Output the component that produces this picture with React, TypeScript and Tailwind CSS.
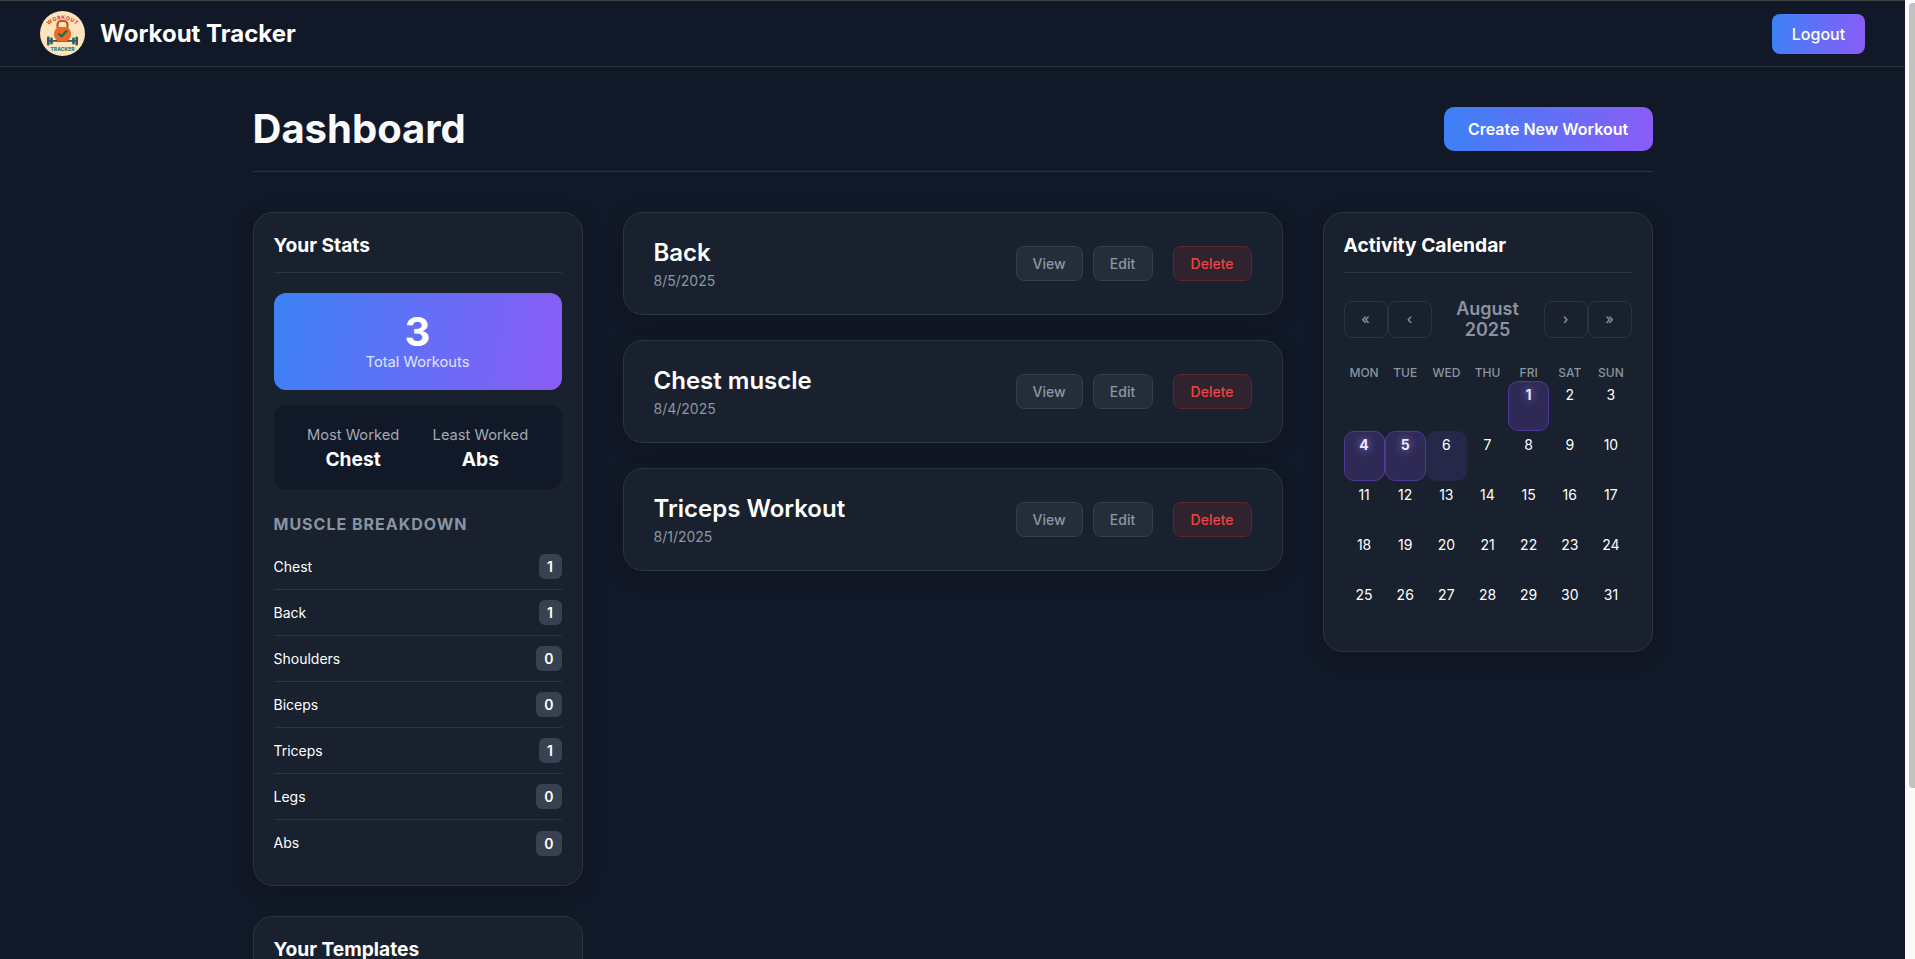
import React from 'react';

const stats = [
  { name: 'Chest', count: 1 },
  { name: 'Back', count: 1 },
  { name: 'Shoulders', count: 0 },
  { name: 'Biceps', count: 0 },
  { name: 'Triceps', count: 1 },
  { name: 'Legs', count: 0 },
  { name: 'Abs', count: 0 },
];

const workouts = [
  { title: 'Back', date: '8/5/2025' },
  { title: 'Chest muscle', date: '8/4/2025' },
  { title: 'Triceps Workout', date: '8/1/2025' },
];

const weekDays = ['MON', 'TUE', 'WED', 'THU', 'FRI', 'SAT', 'SUN'];
const workoutDays = [1, 4, 5];
const today = 6;
const days = Array.from({ length: 31 }, (_, i) => i + 1);

const Logo = () => (
  <svg viewBox="0 0 45 45" className="w-[45px] h-[45px] shrink-0">
    <defs>
      <path id="logo-arc" d="M5 20 A19 19 0 0 1 40 20" />
    </defs>
    <circle cx="22.5" cy="22.5" r="22.5" fill="#fde4bf" />
    <text fontSize="5.4" fontWeight="800" fill="#d9502a" fontFamily="Inter, sans-serif" letterSpacing="0.3">
      <textPath href="#logo-arc" startOffset="50%" textAnchor="middle">WORKOUT</textPath>
    </text>
    <rect x="17.5" y="10" width="10" height="9" rx="3.5" fill="none" stroke="#c2551d" strokeWidth="2.2" />
    <rect x="7" y="29" width="31" height="1.8" fill="#2f5f5c" />
    <rect x="7" y="25.5" width="2.6" height="9" rx="1" fill="#2f5f5c" />
    <rect x="10.2" y="26.5" width="2.6" height="7" rx="1" fill="#2f5f5c" />
    <rect x="32.2" y="26.5" width="2.6" height="7" rx="1" fill="#2f5f5c" />
    <rect x="35.4" y="25.5" width="2.6" height="9" rx="1" fill="#2f5f5c" />
    <path d="M18 16 h9 q4 2.5 4 7 q0 5 -4 7 h-9 q-4 -2 -4 -7 q0 -4.5 4 -7 z" fill="#ec6a25" />
    <path d="M18.5 22.5 l3 3 l5.5 -6" fill="none" stroke="#256a4a" strokeWidth="2.2" />
    <text x="22.5" y="39.5" fontSize="5" fontWeight="800" fill="#2f7a70" textAnchor="middle" fontFamily="Inter, sans-serif">TRACKER</text>
  </svg>
);

const NavButton = ({ label }: { label: string }) => (
  <button className="w-[44px] h-[37px] rounded-lg border border-[#2b3542] text-[#8b93a1] text-sm font-medium">
    {label}
  </button>
);

const ActionButton = ({ label, danger }: { label: string; danger?: boolean }) => (
  <button
    className={
      danger
        ? 'h-[35px] px-[17px] ml-2.5 rounded-lg border border-[#5a2730] bg-[#2e232e] text-[#ef4444] text-sm font-medium'
        : 'h-[35px] min-w-[60px] px-4 rounded-lg border border-[#343e4c] bg-[#242e3a] text-[#8f96a3] text-sm font-medium'
    }
  >
    {label}
  </button>
);

const DayTile = ({ day }: { day: number }) => {
  const hasWorkout = workoutDays.includes(day);
  const isToday = day === today;
  let cls = 'h-[50px] rounded-[10px] text-center text-sm leading-[25px] border';
  if (hasWorkout) cls += ' bg-[#2e2a55] border-[#50389a] font-bold text-[#ece8ff] [text-shadow:0_0_10px_#a78bfa]';
  else if (isToday) cls += ' bg-[#26284a] border-transparent text-white';
  else cls += ' border-transparent text-white';
  return <div className={cls}>{day}</div>;
};

export default function App() {
  return (
    <div className="h-screen flex bg-[#111827] text-white font-['Inter',sans-serif]">
      <div className="flex-1 min-w-0 overflow-y-auto">
        <nav className="h-[67px] flex items-center justify-between pl-10 pr-10 border-t border-b border-t-[#3d4244] border-b-[#2a3240]">
          <div className="flex items-center gap-[15px]">
            <Logo />
            <span className="text-2xl font-bold">Workout Tracker</span>
          </div>
          <button className="w-[93px] h-10 rounded-lg bg-[linear-gradient(100deg,#3b82f6,#8b5cf6)] text-base font-medium">
            Logout
          </button>
        </nav>

        <main className="w-[1400px] mx-auto pt-10 pb-10">
          <header className="flex items-center justify-between h-[65px] pb-5 border-b border-[#2a3240] mb-10">
            <h1 className="text-[40px] leading-[44px] font-bold text-[#f9fafb]">Dashboard</h1>
            <button className="w-[209px] h-11 rounded-[10px] bg-[linear-gradient(100deg,#3b82f6,#8b5cf6)] text-base font-semibold">
              Create New Workout
            </button>
          </header>

          <div className="grid grid-cols-[330px_660px_330px] gap-10 items-start">
            <aside className="flex flex-col gap-[30px]">
              <section className="rounded-[20px] border border-[#2b3542] bg-[#18212d] px-5 pt-5 pb-[19px] shadow-[0_4px_20px_rgba(0,0,0,0.15)]">
                <h2 className="text-[19.2px] font-bold leading-6 pb-[15px] mb-5 border-b border-[#2b3542]">Your Stats</h2>
                <div className="h-[97px] rounded-xl bg-[linear-gradient(100deg,#3b82f6,#8b5cf6)] flex flex-col items-center justify-center">
                  <span className="text-[40px] leading-[40px] font-bold">3</span>
                  <span className="text-[14.7px] leading-5 text-white/80">Total Workouts</span>
                </div>
                <div className="h-[84px] pt-[3px] mt-[15px] rounded-xl bg-[#111827] flex items-center justify-evenly">
                  <div className="text-center">
                    <div className="text-[14.7px] leading-[21px] text-[#a3a9b5]">Most Worked</div>
                    <div className="text-[19.2px] leading-[27px] font-bold">Chest</div>
                  </div>
                  <div className="text-center">
                    <div className="text-[14.7px] leading-[21px] text-[#a3a9b5]">Least Worked</div>
                    <div className="text-[19.2px] leading-[27px] font-bold">Abs</div>
                  </div>
                </div>
                <h3 className="mt-[23px] mb-2 text-base leading-6 font-bold tracking-[1px] text-[#8b93a1]">MUSCLE BREAKDOWN</h3>
                <ul>
                  {stats.map((s, i) => (
                    <li
                      key={s.name}
                      className={
                        i < stats.length - 1
                          ? 'h-[46px] flex items-center justify-between border-b border-[#2b3542]'
                          : 'h-[46px] flex items-center justify-between'
                      }
                    >
                      <span className="text-sm">{s.name}</span>
                      <span className="h-[25px] min-w-[23px] px-2 rounded-md bg-[#374151] text-center text-sm leading-[25px] font-semibold">{s.count}</span>
                    </li>
                  ))}
                </ul>
              </section>

              <section className="h-[210px] rounded-[20px] border border-[#2b3542] bg-[#18212d] px-5 pt-5">
                <h2 className="text-[19.2px] font-bold leading-6 pb-[15px] mb-5 border-b border-[#2b3542]">Your Templates</h2>
              </section>
            </aside>

            <div className="flex flex-col gap-[25px]">
              {workouts.map((w) => (
                <article
                  key={w.title}
                  className="h-[103px] rounded-[20px] border border-[#2b3542] bg-[#18212d] px-[30px] flex items-center justify-between shadow-[0_4px_20px_rgba(0,0,0,0.15)]"
                >
                  <div>
                    <h3 className="text-2xl leading-8 font-semibold">{w.title}</h3>
                    <p className="mt-px text-sm leading-[21px] text-[#8f96a3]">{w.date}</p>
                  </div>
                  <div className="flex items-center gap-2.5">
                    <ActionButton label="View" />
                    <ActionButton label="Edit" />
                    <ActionButton label="Delete" danger />
                  </div>
                </article>
              ))}
            </div>

            <section className="rounded-[20px] border border-[#2b3542] bg-[#18212d] px-5 pt-5 pb-5 shadow-[0_4px_20px_rgba(0,0,0,0.15)]">
              <h2 className="text-[19.2px] font-bold leading-6 pb-[15px] mb-[25px] border-b border-[#2b3542]">Activity Calendar</h2>
              <div className="flex items-center mb-[25px]">
                <NavButton label="«" />
                <NavButton label="‹" />
                <div className="flex-1 text-center text-lg leading-[21px] font-semibold text-[#8b93a1]">
                  August
                  <br />
                  2025
                </div>
                <NavButton label="›" />
                <NavButton label="»" />
              </div>
              <div className="grid grid-cols-7 text-center text-xs font-medium text-[#8b93a1]">
                {weekDays.map((d) => (
                  <div key={d} className="h-4 leading-4">{d}</div>
                ))}
              </div>
              <div className="grid grid-cols-7">
                {Array.from({ length: 4 }, (_, i) => (
                  <div key={`blank-${i}`} />
                ))}
                {days.map((d) => (
                  <DayTile key={d} day={d} />
                ))}
              </div>
            </section>
          </div>
        </main>
      </div>

      {/* scrollbar is hidden in the headless browser, so it's drawn by hand */}
      <div className="w-[10px] shrink-0 bg-[#fafafa] pl-1 pt-[3px]">
        <div className="h-[785px] bg-[#c1c1c1] rounded-tl-sm rounded-bl-sm" />
      </div>
    </div>
  );
}
